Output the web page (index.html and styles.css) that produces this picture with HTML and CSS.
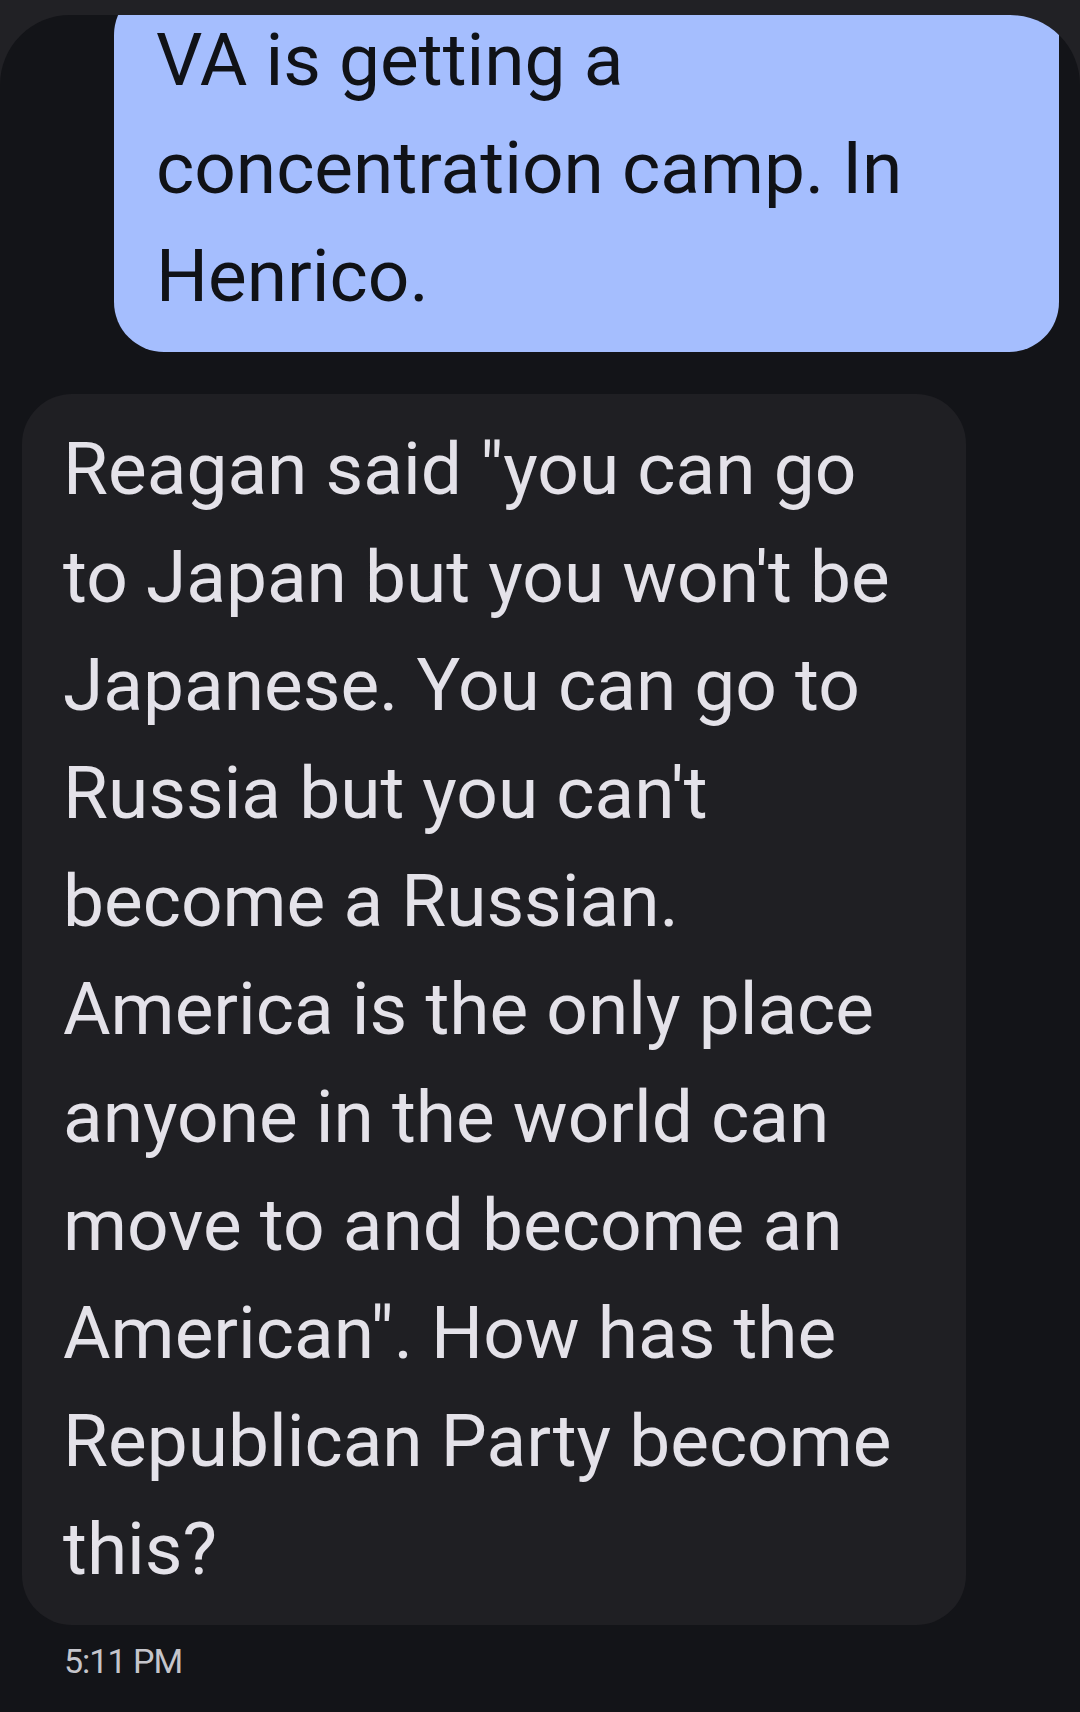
FILE: index.html
```html
<!DOCTYPE html>
<html>
<head>
<meta charset="utf-8">
<link rel="stylesheet" href="styles.css">
</head>
<body>
<div class="panel">
  <div class="bubble sent">VA is getting a<br>concentration camp. In<br>Henrico.</div>
  <div class="bubble received">Reagan said "you can go<br>to Japan but you won't be<br>Japanese. You can go to<br>Russia but you can't<br>become a Russian.<br>America is the only place<br>anyone in the world can<br>move to and become an<br>American". How has the<br>Republican Party become<br>this?</div>
  <div class="time">5:11 PM</div>
</div>
</body>
</html>
```
FILE: styles.css
```css
html, body {
  margin: 0;
  padding: 0;
  background: #212125;
  height: 100%;
}
body {
  font-family: Roboto, "Noto Sans", sans-serif;
  overflow: hidden;
}
.panel {
  margin-top: 15px;
  height: 1697px;
  background: #131418;
  border-radius: 70px 70px 0 0;
  overflow: hidden;
  display: flex;
  flex-direction: column;
}
.bubble {
  font-size: 73px;
  line-height: 108px;
  padding: 21px 44px 22px 42px;
  border-radius: 50px;
  white-space: nowrap;
}
.sent {
  background: #a5befe;
  color: #101217;
  margin: -30px 21px 0 114px;
}
.received {
  background: #1f1f23;
  color: #e4e2e9;
  margin: 42px 114px 0 22px;
  padding-left: 41px;
}
.time {
  margin: 15px 0 0 64px;
  font-size: 34px;
  line-height: 42px;
  letter-spacing: -1px;
  color: #c5c5cb;
}
```
